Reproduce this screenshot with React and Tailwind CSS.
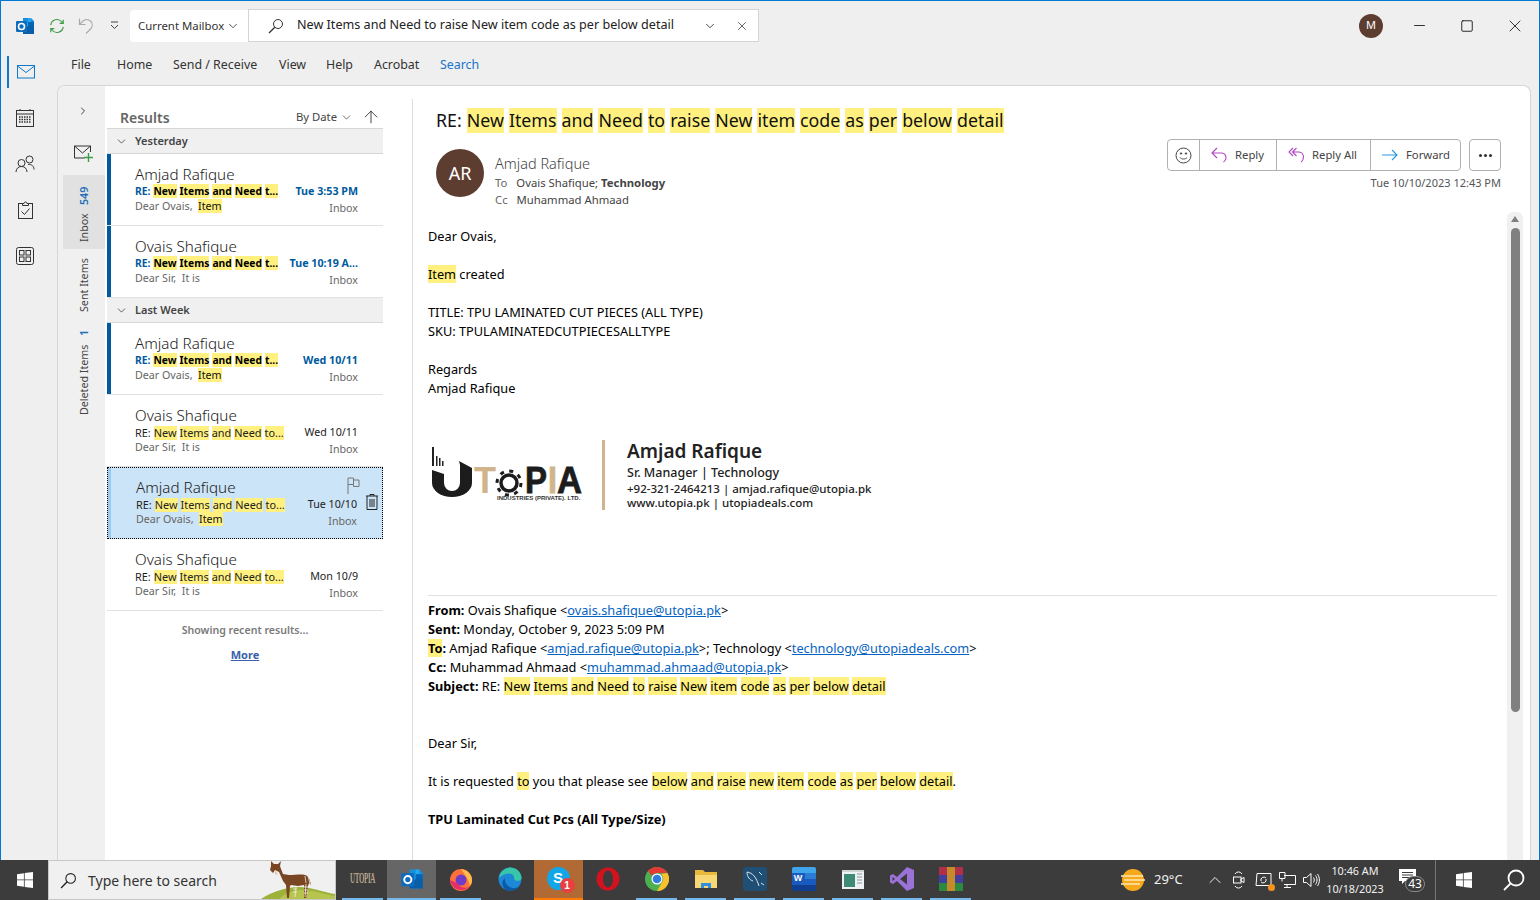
import React from "react";
import { ChevronDown, ChevronRight, X, Minus, Square, ArrowUp } from "lucide-react";

const H = ({ children, className = "" }) => (
  <span className={`bg-[#fff07f] ${className}`}>{children}</span>
);

// ---- window chrome icons ----
const OutlookIcon = ({ size = 20 }) => (
  <svg width={size} height={size} viewBox="0 0 20 20">
    <path d="M8 2h8l3 3v11l-3 2H8z" fill="#1490df" />
    <path d="M13 2h3v4h-3zM8 6h5v4H8z" fill="#28a8ea" />
    <path d="M13 6h6v5h-6z" fill="#0364b8" />
    <path d="M8 11l11-1v8H8z" fill="#0a5ea8" />
    <rect x="1" y="5" width="11" height="11" rx="1" fill="#0f6cbd" />
    <circle cx="6.5" cy="10.5" r="3" fill="none" stroke="#fff" strokeWidth="1.6" />
  </svg>
);

const Sync = () => (
  <svg width="18" height="18" viewBox="0 0 18 18" fill="none" stroke="#3f9c45" strokeWidth="1.3">
    <path d="M2 8a7 7 0 0 1 12.5-3.5L16 6M16 2v4h-4" />
    <path d="M16 10a7 7 0 0 1-12.5 3.5L2 12M2 16v-4h4" />
  </svg>
);

const Undo = () => (
  <svg width="16" height="18" viewBox="0 0 16 18" fill="none" stroke="#ababab" strokeWidth="1.2">
    <path d="M1.5 1.5v6h6M1.5 7.5 5 4a5.5 5.5 0 0 1 8 7.5L8 16.5" />
  </svg>
);

const QuickMenu = () => (
  <svg width="9" height="9" viewBox="0 0 9 9" fill="none" stroke="#444" strokeWidth="1">
    <path d="M1 1h7" />
    <path d="M1 4l3.5 3.5L8 4" />
  </svg>
);

const SearchGlass = ({ size = 16, color = "#333" }) => (
  <svg width={size} height={size} viewBox="0 0 16 16" fill="none" stroke={color} strokeWidth="1">
    <circle cx="10" cy="6" r="4.5" />
    <path d="M6.8 9.2 1 15" strokeWidth="1.3" />
  </svg>
);

const RailMail = () => (
  <svg width="18" height="14" viewBox="0 0 18 14" fill="none" stroke="#0f78c9" strokeWidth="1">
    <rect x="0.5" y="0.5" width="17" height="12.5" />
    <path d="M0.5 1 9 7.5 17.5 1" />
  </svg>
);

const RailCalendar = () => (
  <svg width="18" height="18" viewBox="0 0 18 18" fill="none" stroke="#333" strokeWidth="1">
    <rect x="0.5" y="1.5" width="17" height="16" />
    <path d="M0.5 5h17M4 0v2M14 0v2" />
    <path d="M3 8h12M3 10.5h12M3 13h12" strokeDasharray="1.5 1" strokeWidth="1.6" />
  </svg>
);

const RailPeople = () => (
  <svg width="20" height="18" viewBox="0 0 20 18" fill="none" stroke="#333" strokeWidth="1">
    <circle cx="6.5" cy="8" r="3.5" />
    <path d="M1 17c0-3.5 2.5-5.5 5.5-5.5S12 13.5 12 17" />
    <circle cx="14.5" cy="4.5" r="3.5" />
    <path d="M13 9.5c3.5-.5 6 1.5 6 5" />
  </svg>
);

const RailTasks = () => (
  <svg width="15" height="18" viewBox="0 0 15 18" fill="none" stroke="#333" strokeWidth="1">
    <rect x="0.5" y="2.5" width="14" height="15" />
    <path d="M4.5 4.5v-2h1.5a1.5 1.5 0 0 1 3 0h1.5v2z" fill="#efefef" />
    <path d="M3.5 10.5 6.5 13.5 11.5 7.5" />
  </svg>
);

const RailApps = () => (
  <svg width="18" height="18" viewBox="0 0 18 18" fill="none" stroke="#333" strokeWidth="1">
    <rect x="0.5" y="0.5" width="17" height="17" rx="2" />
    <rect x="3.5" y="3.5" width="4.5" height="4.5" />
    <rect x="10" y="3.5" width="4.5" height="4.5" />
    <rect x="3.5" y="10" width="4.5" height="4.5" />
    <rect x="10" y="10" width="4.5" height="4.5" />
  </svg>
);

const NewMail = () => (
  <svg width="20" height="18" viewBox="0 0 20 18" fill="none">
    <path d="M16.5 7V1H.5v12h10" stroke="#333" />
    <path d="M.5 1 8.5 8 16.5 1" stroke="#333" />
    <path d="M14.5 8v9M10 12.500h9" stroke="#3f9c45" strokeWidth="1.4" />
  </svg>
);

const Flag = () => (
  <svg width="13" height="17" viewBox="0 0 13 17" fill="none" stroke="#777" strokeWidth="1">
    <path d="M1 17V1h5.500v2H12v6.500H6.500V7.500H1" />
    <path d="M6.500 3v4.500" />
  </svg>
);

const Trash = () => (
  <svg width="12" height="16" viewBox="0 0 12 16" fill="none" stroke="#222" strokeWidth="1">
    <path d="M0 2h12M4 2V.5h4V2M1 2v13.500h10V2M4 5v8M6 5v8M8 5v8" />
  </svg>
);

const Smile = () => (
  <svg width="17" height="17" viewBox="0 0 17 17" fill="none" stroke="#444" strokeWidth="1">
    <circle cx="8.500" cy="8.500" r="7.500" />
    <path d="M5 10.500c1.500 2 5.500 2 7 0" />
    <circle cx="6" cy="6.500" r=".7" fill="#444" />
    <circle cx="11" cy="6.500" r=".7" fill="#444" />
  </svg>
);

const ReplyIcon = () => (
  <svg width="17" height="16" viewBox="0 0 17 16" fill="none" stroke="#b146c2" strokeWidth="1.1">
    <path d="M6 1 1 6l5 5M1 6h10a5 5 0 0 1 4 5c0 2-1 3-2.500 4" />
  </svg>
);

const ReplyAllIcon = () => (
  <svg width="17" height="16" viewBox="0 0 17 16" fill="none" stroke="#b146c2" strokeWidth="1.1">
    <path d="M5 1 1 5l4 4M8.500 1l-4 4 4 4M5 5h6a5 5 0 0 1 4.500 5c0 2-1 4-2.500 5" />
  </svg>
);

const ForwardIcon = () => (
  <svg width="16" height="12" viewBox="0 0 16 12" fill="none" stroke="#2899e0" strokeWidth="1.1">
    <path d="M0 6h15M10 1l5 5-5 5" />
  </svg>
);

// ---- email signature logo ----
const UtopiaLogo = () => (
  <svg width="156" height="62" viewBox="0 0 156 62">
    <path d="M2 0h2v19H2zM6 9h1.500v10H6zM9 11h1.500v8H9zM12 14h1.500v5H12z" fill="#222" />
    <path d="M2 23l12 4v9a8 8 0 0 0 16 0V18l-1-4 13 7V36a20 14 0 0 1-40 0z" fill="#1c1c1c" />
    <text x="44" y="46" fontFamily="Liberation Sans" fontWeight="700" fontSize="36" fill="#d0b48c">T</text>
    <circle cx="79" cy="36" r="8" fill="none" stroke="#1c1c1c" strokeWidth="3.500" />
    <circle cx="79" cy="36" r="12" fill="none" stroke="#1c1c1c" strokeWidth="3" strokeDasharray="4 5.400" />
    <text x="95" y="46" fontFamily="Liberation Sans" fontWeight="700" fontSize="36" fill="#1c1c1c" stroke="#1c1c1c" strokeWidth=".8" textLength="22" lengthAdjust="spacingAndGlyphs">P</text>
    <text x="118" y="46" fontFamily="Liberation Sans" fontWeight="700" fontSize="36" fill="#d0b48c" stroke="#d0b48c" strokeWidth=".8" textLength="9" lengthAdjust="spacingAndGlyphs">I</text>
    <text x="127" y="46" fontFamily="Liberation Sans" fontWeight="700" fontSize="36" fill="#1c1c1c" stroke="#1c1c1c" strokeWidth=".8" textLength="25" lengthAdjust="spacingAndGlyphs">A</text>
    <text x="67" y="53" fontFamily="Liberation Sans" fontWeight="700" fontSize="6" fill="#333">INDUSTRIES (PRIVATE). LTD.</text>
  </svg>
);

// ---- taskbar icons ----
const WinLogo = ({ size = 16 }) => (
  <svg width={size} height={size} viewBox="0 0 16 16" fill="#fff">
    <path d="M0 2.200 6.900 1.200v6.300H0zM7.700 1.100 16 0v7.500H7.700zM0 8.300h6.900v6.500L0 13.800zM7.700 8.300H16V16l-8.300-1.100z" />
  </svg>
);

const Okapi = () => (
  <svg width="74" height="39" viewBox="0 0 74 39">
    <path d="M0 39C10 32 25 27 38 27c12 0 24 5 36 7v5z" fill="#9db23a" />
    <path d="M18 39c6-6 14-9 22-9 10 0 22 4 34 6v3z" fill="#b7c54e" />
    <path d="M10 1l3 3h4l3-3-1 5 1 3 2 5 6 1c6 0 12-1 16 0 4 1 5 5 6 10l-2-2-1 3-2 12h-2v-13l-6 1-7-1-1 1-1 12h-2l-1-13-3-4-4-9-4-2-2 3-3-3 1-4z" fill="#7a4522" />
    <path d="M14 10l3 5-3-1z" fill="#d8c3a8" />
    <path d="M35 27l-1 10M45 24l-1 13M43 27h4M43 30h4M43 33h4M32 29h4M32 32h4" stroke="#efe6da" strokeWidth=".9" />
    <path d="M47 16l2 8M44 16l1 7" stroke="#f2e8dc" strokeWidth=".8" />
  </svg>
);

const UtopiaTask = () => (
  <span className="inline-block scale-y-[2.200] font-['Liberation_Serif',serif] text-[7px] font-bold tracking-tighter text-[#b5a48c]">UTOPIA</span>
);

const Firefox = () => (
  <svg width="24" height="24" viewBox="0 0 24 24">
    <circle cx="12" cy="13" r="11" fill="#ff7139" />
    <path d="M12 2c6 1 11 5 11 11 0 3-1 5-2 6-1-6-5-11-9-17z" fill="#ffbd4f" />
    <circle cx="12" cy="13" r="5.500" fill="#6f3bc9" />
    <path d="M1 13c1 6 6 10 11 10 3 0 6-1 8-3-5 2-10 0-12-4z" fill="#e62e6b" />
  </svg>
);

const Edge = () => (
  <svg width="24" height="24" viewBox="0 0 24 24">
    <circle cx="12" cy="12" r="11.500" fill="#1e88d8" />
    <path d="M1 11C2 4 8 .5 12 .5c6 0 11 4 11.500 10 0 3-3 4-6 3-2-1-1-3-2-5-2-3-9-3-14.500 2.500z" fill="#38c6a8" />
    <path d="M8 23c-4-3-5-9-1-12-1 5 3 10 9 10 2 0 4-.5 6-2-3 4-9 6-14 4z" fill="#0c59a4" />
  </svg>
);

const Skype = () => (
  <span className="relative flex h-6 w-6">
    <span className="flex h-[23px] w-[23px] items-center justify-center rounded-full bg-[#12a5e8] font-['Liberation_Sans',sans-serif] text-[15px] font-bold text-white">S</span>
    <span className="absolute -right-[4px] top-[11px] flex h-[15px] w-[15px] items-center justify-center rounded-full bg-[#e74040] font-['Liberation_Sans',sans-serif] text-[10px] font-bold text-white">1</span>
  </span>
);

const Opera = () => (
  <svg width="24" height="24" viewBox="0 0 24 24">
    <ellipse cx="12" cy="12" rx="11.500" ry="11.500" fill="#d2131f" />
    <ellipse cx="12" cy="12" rx="5" ry="8.500" fill="#3c3c3c" />
  </svg>
);

const Chrome = () => (
  <svg width="24" height="24" viewBox="0 0 24 24">
    <circle cx="12" cy="12" r="12" fill="#4caf50" />
    <path d="M12 0a12 12 0 0 1 10.400 6H12a6 6 0 0 0-5.200 3L3 3.800A12 12 0 0 1 12 0z" fill="#e53935" />
    <path d="M22.400 6A12 12 0 0 1 12 24l5.200-9A6 6 0 0 0 16 7z" fill="#fbc02d" />
    <circle cx="12" cy="12" r="5.500" fill="#fff" />
    <circle cx="12" cy="12" r="4.300" fill="#2f7de1" />
  </svg>
);

const Explorer = () => (
  <svg width="22" height="18" viewBox="0 0 22 18">
    <path d="M0 0h8l2 2h12v16H0z" fill="#e8b93a" />
    <path d="M0 5h22v13H0z" fill="#f8d775" />
    <path d="M6 18v-5h10v5h-3v-2H9v2z" fill="#2f8fe0" />
  </svg>
);

const MySql = () => (
  <svg width="24" height="24" viewBox="0 0 24 24">
    <rect width="24" height="24" rx="3" fill="#1f4f74" />
    <path d="M4 5c6 1 9 5 12 14M4 5c0 5 3 8 6 9M16 5l3 3M18 16l3 2" fill="none" stroke="#d7e3ea" strokeWidth="1" />
  </svg>
);

const Word = () => (
  <span className="relative flex h-6 w-6 flex-col overflow-hidden rounded-[2px]">
    <span className="h-1/4 bg-[#41a5ee]" />
    <span className="h-1/4 bg-[#2b7cd3]" />
    <span className="h-1/4 bg-[#185abd]" />
    <span className="h-1/4 bg-[#103f91]" />
    <span className="absolute left-0 top-[6px] flex h-[12px] w-[13px] items-center justify-center bg-[#185abd] font-['Liberation_Sans',sans-serif] text-[9px] font-bold text-white">W</span>
  </span>
);

const Reader = () => (
  <svg width="22" height="19" viewBox="0 0 22 19">
    <rect width="22" height="19" fill="#eef1f1" />
    <rect y="0" width="22" height="2" fill="#cfd4d4" />
    <rect x="2" y="4" width="11" height="13" fill="#3f8a74" />
    <path d="M15 4h5M15 7h5M15 10h5M15 13h5" stroke="#8a9a9a" />
  </svg>
);

const VisualStudio = () => (
  <svg width="24" height="24" viewBox="0 0 24 24">
    <path d="M17 0l7 3v18l-7 3-10-10-4 3-3-1.500V8.500L3 7l4 3z" fill="#9b72d8" />
    <path d="M17 6.500v11L10 12z" fill="#3c3c3c" />
    <path d="M2.500 10 5 12l-2.500 2z" fill="#3c3c3c" />
  </svg>
);

const WinRar = () => (
  <span className="relative flex h-6 w-6 flex-col">
    <span className="h-1/3 bg-[#b0304a]" />
    <span className="h-1/3 bg-[#3f3f9f]" />
    <span className="h-1/3 bg-[#2c8a3e]" />
    <span className="absolute left-[8px] top-0 h-full w-2 bg-[#c48a2c]" />
  </span>
);

const TrayMeet = () => (
  <svg width="12" height="18" viewBox="0 0 12 18" fill="none" stroke="#fff" strokeWidth="1">
    <path d="M2 3a4 4 0 0 1 7 0M2 15a4 4 0 0 0 7 0" />
    <rect x=".5" y="6" width="7.500" height="6" />
    <path d="M8 8l3-1.500v5L8 10z" />
  </svg>
);

const TrayScreen = () => (
  <span className="relative flex">
    <svg width="17" height="16" viewBox="0 0 17 16" fill="none" stroke="#fff" strokeWidth="1">
      <path d="M2 1.500h14v12H1z" />
      <path d="M6 9a3 3 0 0 1 5-3M11 7a3 3 0 0 1-5 3" />
    </svg>
    <span className="absolute -bottom-[3px] -right-[3px] h-[7px] w-[7px] rounded-full bg-[#f7931e]" />
  </span>
);

const TrayNetwork = () => (
  <svg width="17" height="16" viewBox="0 0 17 16" fill="none" stroke="#fff" strokeWidth="1">
    <path d="M5 3.500h11.500v9H5M0.500 .5h5.500v6H.5zM3 6.500v3M8 12.500v3M5 15.500h7" />
  </svg>
);

const TrayVolume = () => (
  <svg width="17" height="16" viewBox="0 0 17 16" fill="none" stroke="#fff" strokeWidth="1">
    <path d="M.5 5.500h3L8 1.500v13l-4.500-4h-3zM10.500 5.500c1 1.500 1 3.500 0 5M12.500 3.500c2 2.500 2 6.500 0 9M14.500 2c2.500 3.500 2.500 8.500 0 12" />
  </svg>
);

const Notify = () => (
  <span className="relative flex h-6 w-8">
    <svg width="17" height="16" viewBox="0 0 17 16" className="mt-[1px]">
      <path d="M0 0h17v12H6l-3 3v-3H0z" fill="#fff" />
      <path d="M3 3.500h11M3 6h11M3 8.500h8" stroke="#3c3c3c" />
    </svg>
    <span className="absolute left-[6px] top-[8px] flex h-[16px] w-[20px] items-center justify-center rounded-full border border-[#888] bg-[#3c3c3c] text-[12px] text-white">43</span>
  </span>
);

// ---- data ----
const rows = [
  { name: "Amjad Rafique", date: "Tue 3:53 PM", preview: "Dear Ovais,", item: true, unread: true },
  { name: "Ovais Shafique", date: "Tue 10:19 A...", preview: "Dear Sir,  It is", unread: true },
  { group: "Last Week" },
  { name: "Amjad Rafique", date: "Wed 10/11", preview: "Dear Ovais,", item: true, unread: true },
  { name: "Ovais Shafique", date: "Wed 10/11", preview: "Dear Sir,  It is" },
  { name: "Amjad Rafique", date: "Tue 10/10", preview: "Dear Ovais,", item: true, selected: true },
  { name: "Ovais Shafique", date: "Mon 10/9", preview: "Dear Sir,  It is" },
];

const taskIcons = [
  { icon: <UtopiaTask />, line: true },
  { icon: <OutlookIcon size={24} />, line: true, active: true },
  { icon: <Firefox />, line: true },
  { icon: <Edge /> },
  { icon: <Skype />, orange: true },
  { icon: <Opera /> },
  { icon: <Chrome />, line: true },
  { icon: <Explorer />, line: true },
  { icon: <MySql />, line: true },
  { icon: <Word />, line: true },
  { icon: <Reader />, line: true },
  { icon: <VisualStudio />, line: true },
  { icon: <WinRar />, line: true },
];

const tabs = [
  ["File", "w-[46px]"],
  ["Home", "w-[56px]"],
  ["Send / Receive", "w-[106px]"],
  ["View", "w-[47px]"],
  ["Help", "w-[48px]"],
  ["Acrobat", "w-[66px]"],
];

const Word_ = ({ children }) => <H className="mr-[3px] inline-block leading-[14px]">{children}</H>;

const MailRow = ({ row }) => {
  const tone = row.unread ? "text-[10.300px] font-bold text-black" : "text-[10.900px] text-[#222]";
  return (
    <div
      className={`relative h-[72px] pl-[28px] pr-[25px] ${
        row.selected ? "border border-dotted border-black bg-[#cce4f7] pt-[8px]" : "border-b border-[#e1e1e1] pt-[9px]"
      }`}
    >
      {row.unread && <div className="absolute bottom-0 left-0 top-0 w-[4px] bg-[#005a9e]" />}
      {row.selected && <div className="absolute bottom-0 left-0 top-0 w-[3px] bg-[#9ccbee]" />}
      <div className="text-[15.200px] font-light leading-[22px] text-[#222]">{row.name}</div>
      <div className="mt-[-1px] flex justify-between text-[10.700px] leading-[15px] whitespace-nowrap">
        <span className={tone}>
          <span className={`mr-[3px] ${row.unread ? "text-[#005a9e]" : ""}`}>RE:</span>
          <Word_>New</Word_>
          <Word_>Items</Word_>
          <Word_>and</Word_>
          <Word_>Need</Word_>
          <H className="inline-block leading-[14px]">{row.unread ? "t..." : "to..."}</H>
        </span>
        <span className={row.unread ? "font-bold text-[#005a9e]" : "text-[#222]"}>{row.date}</span>
      </div>
      <div className="flex justify-between text-[10.700px] leading-[15px] text-[#666] whitespace-pre">
        <span>
          {row.preview}
          {row.item && (
            <>
              {"  "}
              <H className="text-[#111]">Item</H>
            </>
          )}
        </span>
        <span className="mt-[2px]">Inbox</span>
      </div>
      {row.selected && (
        <>
          <div className="absolute right-[22px] top-[9px]">
            <Flag />
          </div>
          <div className="absolute right-[4px] top-[26px]">
            <Trash />
          </div>
        </>
      )}
    </div>
  );
};

const GroupHead = ({ label }) => (
  <div className="flex h-[25px] items-center border-b border-[#d6d6d6] bg-[#f0f0f0] pl-[8px] pt-[1px] text-[11px] font-semibold text-[#444]">
    <ChevronDown size={13} strokeWidth={1.5} className="mr-[7px] text-[#444]" />
    {label}
  </div>
);

const Link = ({ children }) => <span className="text-[#0563c1] underline">{children}</span>;

const SUBJECT_WORDS = ["New", "Items", "and", "Need", "to", "raise", "New", "item", "code", "as", "per", "below", "detail"];

const Blank = ({ h = "h-[19px]" }) => <div className={h} />;

export default function App() {
  return (
    <div className="flex h-[900px] w-[1540px] flex-col overflow-hidden bg-[#efefef] font-['Noto_Sans',sans-serif] text-[13px] text-[#222]">
      {/* window */}
      <div className="flex min-h-0 flex-1 flex-col border-x border-t border-[#0078d4]">
        {/* title bar */}
        <div className="flex h-[49px] shrink-0 items-center">
          <div className="flex w-[48px] justify-center">
            <OutlookIcon />
          </div>
          <div className="flex w-[16px] justify-center">
            <Sync />
          </div>
          <div className="flex w-[42px] justify-center">
            <Undo />
          </div>
          <div className="flex w-[14px] justify-center">
            <QuickMenu />
          </div>
          <div className="ml-[9px] flex h-[32px] w-[118px] items-center justify-between whitespace-nowrap rounded-l-[4px] bg-white pl-[8px] pr-[8px] text-[11.400px] text-[#333]">
            Current Mailbox
            <ChevronDown size={14} strokeWidth={1.4} className="shrink-0" />
          </div>
          <div className="flex h-[33px] w-[511px] items-center border border-[#d4d4d4] bg-white pl-[19px] pr-[9px] text-[12.600px] text-[#222]">
            <SearchGlass />
            <span className="ml-[13px] flex-1 whitespace-nowrap">New Items and Need to raise New item code as per below detail</span>
            <ChevronDown size={14} strokeWidth={1.4} className="mr-[18px]" />
            <X size={14} strokeWidth={1.2} />
          </div>
          <div className="flex-1" />
          <div className="mr-[12px] flex h-6 w-6 items-center justify-center rounded-full bg-[#5e3d31] text-[11px] text-white">M</div>
          <div className="flex w-[48px] justify-center">
            <Minus size={17} strokeWidth={1.2} className="text-[#111]" />
          </div>
          <div className="flex w-[48px] justify-center">
            <Square size={14} strokeWidth={1.5} className="text-[#111]" />
          </div>
          <div className="flex w-[48px] justify-center">
            <X size={20} strokeWidth={1} className="text-[#111]" />
          </div>
        </div>

        <div className="flex min-h-0 flex-1">
          {/* app rail */}
          <div className="flex w-[56px] shrink-0 flex-col gap-[14px] pt-[6px]">
            <div className="ml-[6px] flex h-[32px] w-[36px] items-center justify-center border-l-2 border-[#0f78c9]">
              <RailMail />
            </div>
            <div className="flex h-[32px] w-[48px] items-center justify-center">
              <RailCalendar />
            </div>
            <div className="flex h-[32px] w-[48px] items-center justify-center">
              <RailPeople />
            </div>
            <div className="flex h-[32px] w-[48px] items-center justify-center">
              <RailTasks />
            </div>
            <div className="flex h-[32px] w-[48px] items-center justify-center">
              <RailApps />
            </div>
          </div>

          <div className="flex min-w-0 flex-1 flex-col pr-[8px]">
            {/* ribbon tabs */}
            <div className="flex h-[35px] shrink-0 items-center pb-[4px] pl-[14px] text-[12.400px] text-[#333]">
              {tabs.map(([label, width]) => (
                <span key={label} className={width}>
                  {label}
                </span>
              ))}
              <span className="text-[#1a73c7]">Search</span>
            </div>

            {/* main panel */}
            <div className="flex min-h-0 flex-1 overflow-hidden rounded-t-[8px] border-x border-t border-[#d6d6d6] bg-white">
              {/* folder rail */}
              <div className="flex w-[47px] shrink-0 flex-col items-end bg-[#f0f0f0] text-[10.700px] text-[#444]">
                <div className="flex h-[50px] w-full items-center justify-center pl-[2px]">
                  <ChevronRight size={12} strokeWidth={2} className="text-[#444]" />
                </div>
                <div className="flex h-[39px] w-full items-center justify-center pb-[4px] pl-[4px]">
                  <NewMail />
                </div>
                <div className="flex h-[74px] w-[42px] items-center justify-center bg-[#e1e1e1] pb-[4px] [writing-mode:vertical-rl] rotate-180">
                  <span>Inbox</span>
                  <span className="mt-[8px] font-semibold text-[#1e6fb8]">549</span>
                </div>
                <div className="mt-[10px] flex h-[53px] w-[42px] items-center justify-center whitespace-nowrap [writing-mode:vertical-rl] rotate-180">
                  Sent Items
                </div>
                <div className="mt-[19px] flex h-[83px] w-[42px] items-center justify-center whitespace-nowrap [writing-mode:vertical-rl] rotate-180">
                  <span>Deleted Items</span>
                  <span className="mt-[8px] font-semibold text-[#1e6fb8]">1</span>
                </div>
              </div>

              {/* message list */}
              <div className="mt-[13px] w-[308px] shrink-0 border-r border-[#dcdcdc] pl-[2px] pr-[29px]">
                <div className="flex h-[30px] items-center border-b border-[#d6d6d6] pl-[13px] pr-[2px] pt-[8px]">
                  <span className="flex-1 text-[14px] font-semibold text-[#666]">Results</span>
                  <span className="flex items-center text-[11.300px] text-[#444]">
                    By Date
                    <ChevronDown size={13} strokeWidth={1.4} className="ml-[3px]" />
                  </span>
                  <ArrowUp size={20} strokeWidth={1} className="ml-[8px] mb-[2px] text-[#222]" />
                </div>
                <GroupHead label="Yesterday" />
                {rows.map((row, i) =>
                  row.group ? <GroupHead key={i} label={row.group} /> : <MailRow key={i} row={row} />,
                )}
                <div className="pt-[12px] text-center text-[10.600px] font-semibold text-[#7a7a7a]">Showing recent results...</div>
                <div className="pt-[8px] text-center text-[11px] font-bold text-[#3a5fa8] underline">More</div>
              </div>

              {/* reading pane */}
              <div className="flex min-w-0 flex-1 flex-col">
                <div className="mt-[22px] flex h-[25px] items-center whitespace-nowrap pl-[23px] text-[17.800px] text-[#111]">
                  <span className="mr-[5px]">RE:</span>
                  {SUBJECT_WORDS.map((w, i) => (
                    <H key={i} className="mr-[5px] inline-block leading-[25px]">
                      {w}
                    </H>
                  ))}
                </div>

                <div className="mt-[6px] flex h-[73px] shrink-0 pl-[23px] pr-[29px]">
                  <div className="mt-[10px] flex h-[48px] w-[48px] items-center justify-center rounded-full bg-[#5e3d31] text-[18px] text-white">AR</div>
                  <div className="ml-[11px] flex-1 pt-[14px]">
                    <div className="text-[14.500px] font-light leading-[20px] text-[#444]">Amjad Rafique</div>
                    <div className="mt-[1px] text-[11.300px] leading-[17px] text-[#444]">
                      <span className="mr-[9px] text-[#666]">To</span>
                      Ovais Shafique; <span className="font-bold">Technology</span>
                    </div>
                    <div className="text-[11.300px] leading-[17px] text-[#444]">
                      <span className="mr-[9px] text-[#666]">Cc</span>
                      Muhammad Ahmaad
                    </div>
                  </div>
                  <div className="flex flex-col items-end">
                    <div className="flex">
                      <div className="flex h-[32px] items-center rounded-[4px] border border-[#b0b0b0] text-[11.300px] text-[#444]">
                        <div className="flex h-full w-[32px] items-center justify-center border-r border-[#b0b0b0]">
                          <Smile />
                        </div>
                        <div className="flex h-full w-[77px] items-center gap-[7px] border-r border-[#b0b0b0] pl-[11px]">
                          <ReplyIcon />
                          Reply
                        </div>
                        <div className="flex h-full w-[94px] items-center gap-[7px] border-r border-[#b0b0b0] pl-[11px]">
                          <ReplyAllIcon />
                          Reply All
                        </div>
                        <div className="flex h-full w-[89px] items-center gap-[8px] pl-[11px]">
                          <ForwardIcon />
                          Forward
                        </div>
                      </div>
                      <div className="ml-[8px] flex h-[32px] w-[32px] items-center justify-center gap-[2px] rounded-[4px] border border-[#b0b0b0]">
                        <span className="h-[3px] w-[3px] rounded-full bg-[#333]" />
                        <span className="h-[3px] w-[3px] rounded-full bg-[#333]" />
                        <span className="h-[3px] w-[3px] rounded-full bg-[#333]" />
                      </div>
                    </div>
                    <div className="mt-[3px] text-[11px] leading-[17px] text-[#555]">Tue 10/10/2023 12:43 PM</div>
                  </div>
                </div>

                <div className="flex min-h-0 flex-1">
                  {/* message body */}
                  <div className="min-w-0 flex-1 overflow-hidden pl-[15px] pr-[10px] pt-[15px] text-[12.750px] leading-[19px] text-black">
                    <div>Dear Ovais,</div>
                    <Blank />
                    <div>
                      <H>Item</H> created
                    </div>
                    <Blank />
                    <div>TITLE: TPU LAMINATED CUT PIECES (ALL TYPE)</div>
                    <div>SKU: TPULAMINATEDCUTPIECESALLTYPE</div>
                    <Blank />
                    <div>Regards</div>
                    <div>Amjad Rafique</div>
                    <div className="mt-[42px] flex h-[70px]">
                      <div className="ml-[2px] mt-[7px] w-[172px]">
                        <UtopiaLogo />
                      </div>
                      <div className="w-[3px] bg-[#d0b48c]" />
                      <div className="ml-[22px] text-[#222]">
                        <div className="text-[19px] font-semibold leading-[23px]">Amjad Rafique</div>
                        <div className="mt-[2px] text-[12.500px] font-medium leading-[16px]">Sr. Manager | Technology</div>
                        <div className="mt-[1px] text-[11.500px] font-medium leading-[14px]">+92-321-2464213 | amjad.rafique@utopia.pk</div>
                        <div className="text-[11.500px] font-medium leading-[14px]">www.utopia.pk | utopiadeals.com</div>
                      </div>
                    </div>
                    <div className="mt-[85px] mb-[5px] border-t border-[#e1e1e1]" />
                    <div>
                      <b>From:</b> Ovais Shafique &lt;<Link>ovais.shafique@utopia.pk</Link>&gt;
                    </div>
                    <div>
                      <b>Sent:</b> Monday, October 9, 2023 5:09 PM
                    </div>
                    <div>
                      <b>
                        <H>To</H>:
                      </b>{" "}
                      Amjad Rafique &lt;<Link>amjad.rafique@utopia.pk</Link>&gt;; Technology &lt;
                      <Link>technology@utopiadeals.com</Link>&gt;
                    </div>
                    <div>
                      <b>Cc:</b> Muhammad Ahmaad &lt;<Link>muhammad.ahmaad@utopia.pk</Link>&gt;
                    </div>
                    <div>
                      <b>Subject:</b> RE:{" "}
                      {SUBJECT_WORDS.map((w, i) => (
                        <React.Fragment key={i}>
                          <H>{w}</H>{" "}
                        </React.Fragment>
                      ))}
                    </div>
                    <Blank h="h-[38px]" />
                    <div>Dear Sir,</div>
                    <Blank />
                    <div>
                      It is requested <H>to</H> you that please see <H>below</H> <H>and</H> <H>raise</H> <H>new</H>{" "}
                      <H>item</H> <H>code</H> <H>as</H> <H>per</H> <H>below</H> <H>detail</H>.
                    </div>
                    <Blank />
                    <div className="font-bold">TPU Laminated Cut Pcs (All Type/Size)</div>
                  </div>

                  {/* scrollbar */}
                  <div className="mr-[7px] flex w-[16px] shrink-0 flex-col items-center rounded-t-[6px] bg-[#f0f0f0] pt-[4px]">
                    <div className="h-0 w-0 border-x-[4px] border-b-[6px] border-x-transparent border-b-[#808080]" />
                    <div className="mt-[6px] h-[484px] w-[9px] rounded-full bg-[#808080]" />
                  </div>
                </div>
              </div>
            </div>
          </div>
        </div>
      </div>

      {/* taskbar */}
      <div className="flex h-[40px] shrink-0 items-stretch bg-[#3c3c3c] text-white">
        <div className="flex w-[48px] items-center justify-center pl-[2px]">
          <WinLogo />
        </div>
        <div className="relative flex w-[288px] items-center overflow-hidden border border-[#c8c8c8] bg-[#f0f0f0] pl-[11px] text-[14px] text-[#333]">
          <SearchGlass size={17} color="#222" />
          <span className="ml-[11px]">Type here to search</span>
          <div className="absolute bottom-0 right-0">
            <Okapi />
          </div>
        </div>
        <div className="ml-[2px] flex">
          {taskIcons.map((t, i) => (
            <div
              key={i}
              className={`flex w-[49px] flex-col ${t.active ? "bg-[#666666]" : ""} ${t.orange ? "bg-[#b26a35]" : ""}`}
            >
              <div className="flex flex-1 items-center justify-center">{t.icon}</div>
              <div
                className={`h-[2px] ${t.line ? "bg-[#76b9ed]" : ""} ${t.line && !t.active ? "mx-[4px]" : ""} ${
                  t.orange ? "bg-[#ff7a00]" : ""
                }`}
              />
            </div>
          ))}
        </div>
        <div className="flex-1" />
        <div className="flex items-center text-[#f2f2f2]">
          <svg width="24" height="24" viewBox="0 0 24 24">
            <circle cx="12" cy="12" r="11" fill="#f7a81b" />
            <path d="M0 8h22M3 12h21M0 16h19" stroke="#ffe9b8" strokeWidth="1.300" />
          </svg>
          <span className="ml-[9px] w-[49px] text-[13px]">29°C</span>
          <div className="flex w-[24px] justify-center">
            <ChevronDown size={20} strokeWidth={1.2} className="rotate-180" />
          </div>
          <div className="flex w-[24px] justify-center">
            <TrayMeet />
          </div>
          <div className="flex w-[24px] justify-center">
            <TrayScreen />
          </div>
          <div className="flex w-[24px] justify-center">
            <TrayNetwork />
          </div>
          <div className="flex w-[24px] justify-center">
            <TrayVolume />
          </div>
          <div className="w-[64px] text-center text-[10.800px] leading-[18px]">
            <div>10:46 AM</div>
            <div>10/18/2023</div>
          </div>
          <div className="ml-[12px] w-[36px]">
            <Notify />
          </div>
          <div className="h-full w-px bg-[#777]" />
          <div className="flex w-[56px] justify-center">
            <WinLogo />
          </div>
          <div className="flex w-[48px] justify-center pr-[4px]">
            <svg width="22" height="22" viewBox="0 0 22 22" fill="none" stroke="#fff" strokeWidth="1.800">
              <circle cx="13" cy="9" r="7.500" />
              <path d="M7.500 14.500 1 21" />
            </svg>
          </div>
        </div>
      </div>
    </div>
  );
}
